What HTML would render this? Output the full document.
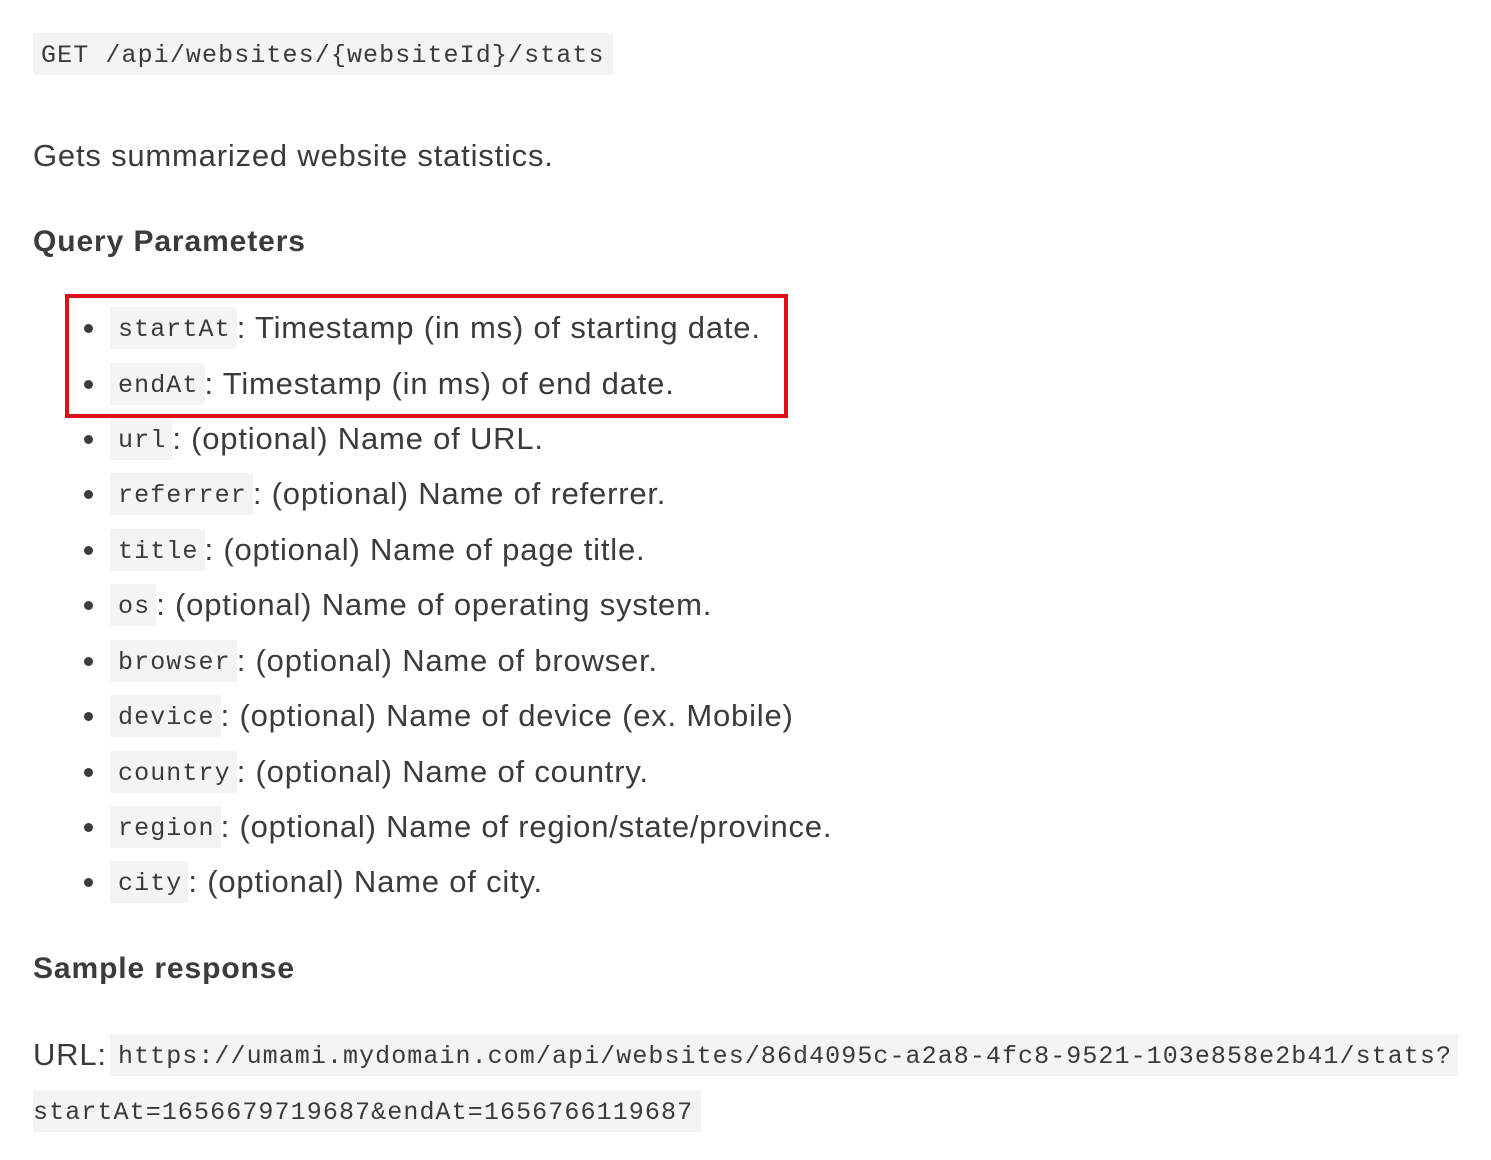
<!DOCTYPE html>
<html><head><meta charset="utf-8"><style>
html,body{margin:0;padding:0;background:#fff;width:1491px;height:1160px;overflow:hidden}
body{font-family:"Liberation Sans",sans-serif;color:#3b3b3b;position:relative}
.r{position:absolute;height:42px;line-height:42px;white-space:nowrap;font-size:31px;letter-spacing:0.8px}
code{font-family:"Liberation Mono",monospace;font-size:25px;letter-spacing:1.1px;background:#f4f4f4;padding:0 6px 0 8px;display:inline-block;height:42px;line-height:46px;vertical-align:top;color:#3a3a3a}
.li{left:110px}
.li:before{content:"";position:absolute;left:-26px;top:17px;width:9px;height:9px;border-radius:50%;background:#3b3b3b}
h3{position:absolute;margin:0;font-size:30px;font-weight:bold;color:#3b3b3b;line-height:40px;letter-spacing:0.9px}
.box{position:absolute;left:65px;top:294px;width:715px;height:116px;border:4px solid #e0101a}
</style></head><body>
<div class="r" style="left:33px;top:33px"><code style="padding:0 8px">GET /api/websites/{websiteId}/stats</code></div>
<div class="r" style="left:33px;top:135px">Gets summarized website statistics.</div>
<h3 style="left:33px;top:222px">Query Parameters</h3>
<div class="box"></div>
<div class="r li" style="top:307px"><code>startAt</code>: Timestamp (in ms) of starting date.</div>
<div class="r li" style="top:363px"><code>endAt</code>: Timestamp (in ms) of end date.</div>
<div class="r li" style="top:418px"><code>url</code>: (optional) Name of URL.</div>
<div class="r li" style="top:473px"><code>referrer</code>: (optional) Name of referrer.</div>
<div class="r li" style="top:529px"><code>title</code>: (optional) Name of page title.</div>
<div class="r li" style="top:584px"><code>os</code>: (optional) Name of operating system.</div>
<div class="r li" style="top:640px"><code>browser</code>: (optional) Name of browser.</div>
<div class="r li" style="top:695px"><code>device</code>: (optional) Name of device (ex. Mobile)</div>
<div class="r li" style="top:751px"><code>country</code>: (optional) Name of country.</div>
<div class="r li" style="top:806px"><code>region</code>: (optional) Name of region/state/province.</div>
<div class="r li" style="top:861px"><code>city</code>: (optional) Name of city.</div>
<h3 style="left:33px;top:949px">Sample response</h3>
<div class="r" style="left:33px;top:1034px">URL:</div>
<div class="r" style="left:110px;top:1034px"><code style="letter-spacing:1.07px">https://umami.mydomain.com/api/websites/86d4095c-a2a8-4fc8-9521-103e858e2b41/stats?</code></div>
<div class="r" style="left:33px;top:1090px"><code style="padding:0 8px 0 0">startAt=1656679719687&amp;endAt=1656766119687</code></div>
</body></html>
